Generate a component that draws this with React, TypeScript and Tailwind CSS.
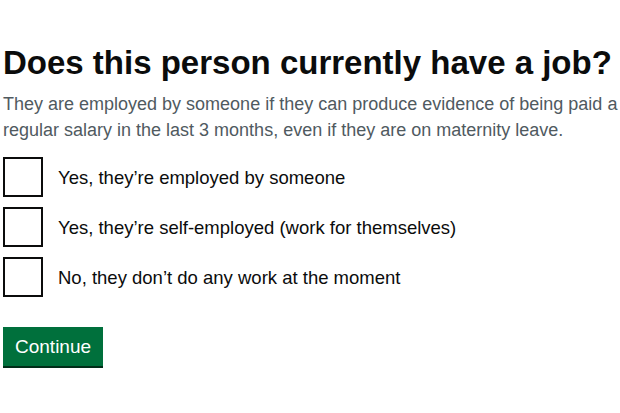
const options = [
  'Yes, they’re employed by someone',
  'Yes, they’re self-employed (work for themselves)',
  'No, they don’t do any work at the moment',
];

export default function App() {
  return (
    <div className="min-h-screen bg-white pl-[3px] pt-[43px] text-[#0b0c0c] font-['Liberation_Sans',Arial,sans-serif]">
      <h1 className="text-[33px] font-bold leading-[40px] whitespace-nowrap">
        Does this person currently have a job?
      </h1>
      <p className="mt-[8px] text-[18px] leading-[26px] text-[#505a5f] w-[620px]">
        They are employed by someone if they can produce evidence of being paid a regular salary in the last 3 months, even if they are on maternity leave.
      </p>

      <div className="mt-[14px] flex flex-col gap-[10px]">
        {options.map((label) => (
          <label key={label} className="flex items-center gap-[15px]">
            <span className="w-[40px] h-[40px] border-2 border-[#0b0c0c] bg-white shrink-0" />
            <span className="text-[18.5px] leading-[25px]">{label}</span>
          </label>
        ))}
      </div>

      <button className="mt-[30px] h-[39px] px-[12px] pt-[2px] bg-[#00703c] text-white text-[19px] shadow-[0_2px_0_#002d18] mb-[2px]">
        Continue
      </button>
    </div>
  );
}
